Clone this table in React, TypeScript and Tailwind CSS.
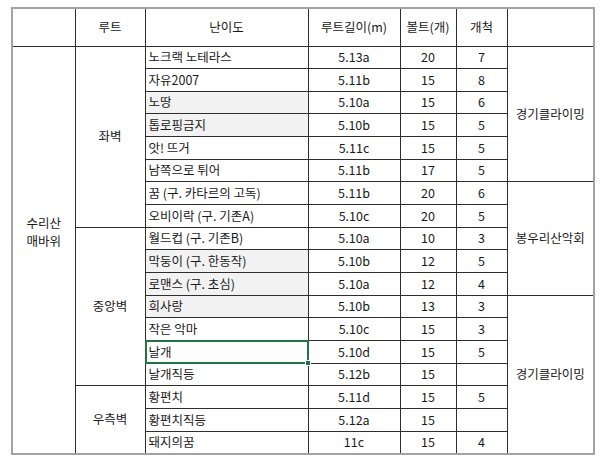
import React from 'react';

type Route = {
  name: string;
  grade: string;
  bolts: string;
  setter: string;
  shaded?: boolean;
  selected?: boolean;
};

// 수리산 매바위 루트 목록
const routes: Route[] = [
  { name: '노크랙 노테라스', grade: '5.13a', bolts: '20', setter: '7' },
  { name: '자유2007', grade: '5.11b', bolts: '15', setter: '8' },
  { name: '노땅', grade: '5.10a', bolts: '15', setter: '6', shaded: true },
  { name: '톱로핑금지', grade: '5.10b', bolts: '15', setter: '5', shaded: true },
  { name: '앗! 뜨거', grade: '5.11c', bolts: '15', setter: '5' },
  { name: '남쪽으로 튀어', grade: '5.11b', bolts: '17', setter: '5' },
  { name: '꿈 (구. 카타르의 고독)', grade: '5.11b', bolts: '20', setter: '6' },
  { name: '오비이락 (구. 기존A)', grade: '5.10c', bolts: '20', setter: '5' },
  { name: '월드컵 (구. 기존B)', grade: '5.10a', bolts: '10', setter: '3' },
  { name: '막둥이 (구. 한동작)', grade: '5.10b', bolts: '12', setter: '5', shaded: true },
  { name: '로맨스 (구. 초심)', grade: '5.10a', bolts: '12', setter: '4', shaded: true },
  { name: '희사랑', grade: '5.10b', bolts: '13', setter: '3', shaded: true },
  { name: '작은 악마', grade: '5.10c', bolts: '15', setter: '3' },
  { name: '날개', grade: '5.10d', bolts: '15', setter: '5', selected: true },
  { name: '날개직등', grade: '5.12b', bolts: '15', setter: '' },
  { name: '황편치', grade: '5.11d', bolts: '15', setter: '5' },
  { name: '황편치직등', grade: '5.12a', bolts: '15', setter: '' },
  { name: '돼지의꿈', grade: '11c', bolts: '15', setter: '4' },
];

// 벽 구분 (시작 행 -> [이름, 행 수])
const walls: Record<number, [string, number]> = {
  0: ['좌벽', 8],
  8: ['중앙벽', 7],
  15: ['우측벽', 3],
};

// 개척 팀 구분
const clubs: Record<number, [string, number]> = {
  0: ['경기클라이밍', 6],
  6: ['봉우리산악회', 5],
  11: ['경기클라이밍', 7],
};

const cell = 'border border-[#2e2e2e] text-center align-middle p-0';

export default function App() {
  return (
    <div
      className="w-[600px] h-[465px] bg-white text-[#1a1a1a] text-[12.5px] leading-none"
      style={{ fontFamily: '"Noto Sans CJK KR", "Noto Sans", sans-serif' }}
    >
      <div className="pt-[7px] pl-[11px]">
        <table className="table-fixed border-collapse w-[582px] border-2 border-[#a3a3a3]">
          <colgroup>
            <col className="w-[63px]" />
            <col className="w-[70px]" />
            <col className="w-[163px]" />
            <col className="w-[92px]" />
            <col className="w-[56px]" />
            <col className="w-[51px]" />
            <col className="w-[87px]" />
          </colgroup>
          <tbody>
            <tr className="h-[38px]">
              <td className={cell}></td>
              <td className={cell}>루트</td>
              <td className={cell}>난이도</td>
              <td className={cell}>루트길이(m)</td>
              <td className={cell}>볼트(개)</td>
              <td className={cell}>개척</td>
              <td className={cell}></td>
            </tr>
            {routes.map((r, i) => (
              <tr key={i} className="h-[22.67px]">
                {i === 0 && (
                  <td rowSpan={18} className={cell}>
                    <div className="pb-[36px] leading-[18px]">
                      수리산
                      <br />
                      매바위
                    </div>
                  </td>
                )}
                {walls[i] && (
                  <td rowSpan={walls[i][1]} className={cell}>
                    {walls[i][0]}
                  </td>
                )}
                <td
                  className={`border border-[#2e2e2e] align-middle text-left pl-[3px] relative ${
                    r.shaded ? 'bg-[#f2f2f2]' : ''
                  }`}
                >
                  {r.name}
                  {r.selected && (
                    <div className="absolute -left-[1px] -top-[1px] -right-[1px] -bottom-[1px] border-2 border-[#217346]">
                      <div className="absolute -right-[4px] -bottom-[4px] w-[6px] h-[6px] bg-[#217346] border border-white" />
                    </div>
                  )}
                </td>
                <td className={cell}>{r.grade}</td>
                <td className={cell}>{r.bolts}</td>
                <td className={cell}>{r.setter}</td>
                {clubs[i] && (
                  <td rowSpan={clubs[i][1]} className={cell}>
                    {clubs[i][0]}
                  </td>
                )}
              </tr>
            ))}
          </tbody>
        </table>
      </div>
    </div>
  );
}
